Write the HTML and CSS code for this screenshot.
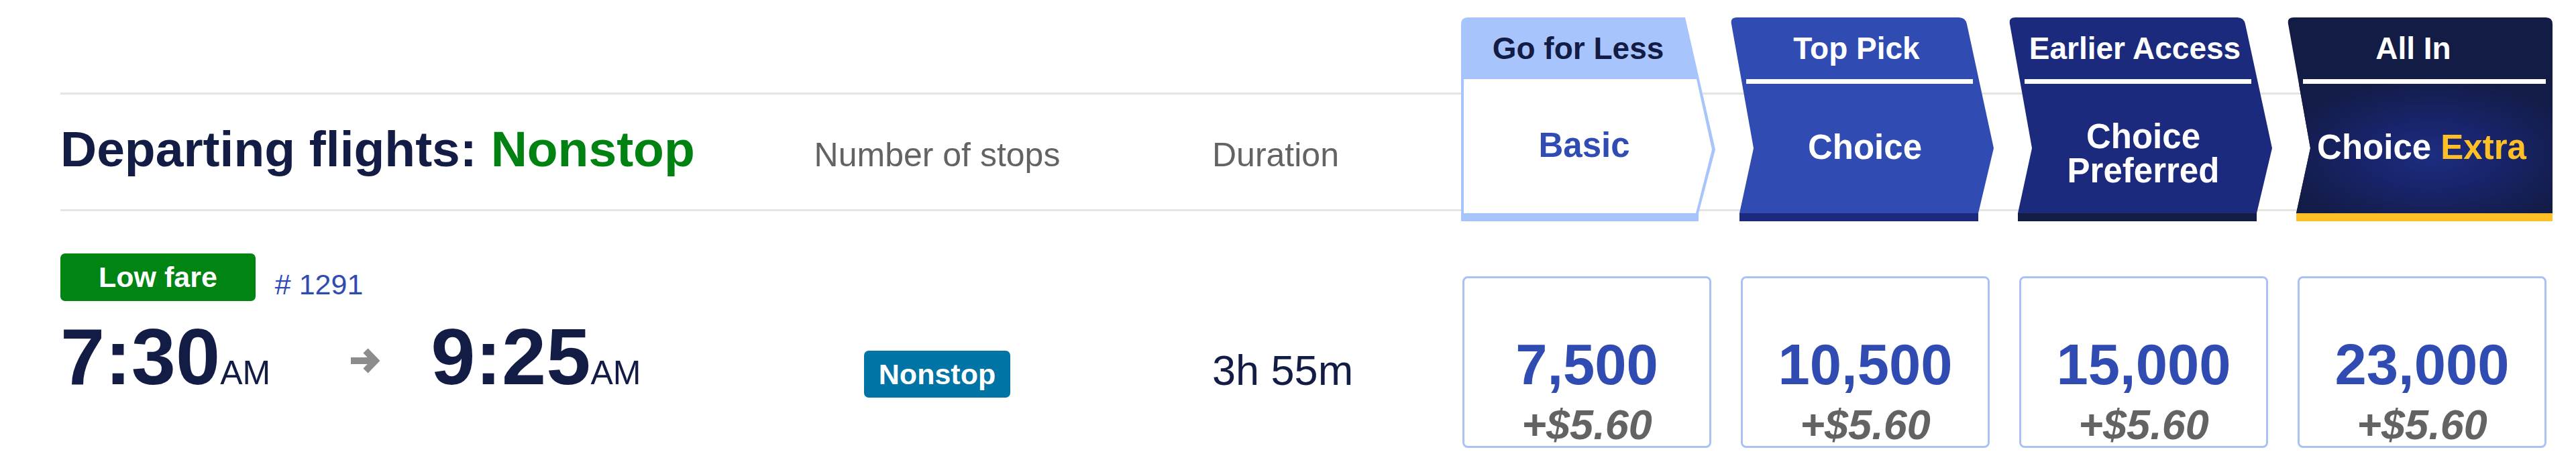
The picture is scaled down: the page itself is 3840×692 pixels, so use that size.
FILE: index.html
```html
<!DOCTYPE html>
<html lang="en">
<head>
<meta charset="utf-8">
<title>Departing flights</title>
<link rel="stylesheet" href="styles.css">
</head>
<body>
<main class="page">
  <section class="thead">
    <div class="thead-labels">
      <h2 class="title">Departing flights: <span class="title-accent">Nonstop</span></h2>
      <div class="col-stops col-label">Number of stops</div>
      <div class="col-dur col-label">Duration</div>
    </div>
    <div class="fare-tabs">
      <div class="tab tab-basic">
        <div class="tab-head">Go for Less</div>
        <div class="tab-body">Basic</div>
        <div class="tab-bar"></div>
      </div>
      <div class="tab tab-choice">
        <div class="tab-head">Top Pick</div>
        <div class="tab-rule"></div>
        <div class="tab-body">Choice</div>
        <div class="tab-bar"></div>
      </div>
      <div class="tab tab-pref">
        <div class="tab-head">Earlier Access</div>
        <div class="tab-rule"></div>
        <div class="tab-body tab-body-2">Choice<br>Preferred</div>
        <div class="tab-bar"></div>
      </div>
      <div class="tab tab-extra">
        <div class="tab-head">All In</div>
        <div class="tab-rule"></div>
        <div class="tab-body">Choice&nbsp;<span class="extra-word">Extra</span></div>
        <div class="tab-bar"></div>
      </div>
    </div>
  </section>

  <section class="flight">
    <div class="flight-main">
      <div class="flight-tags">
        <span class="badge-low">Low fare</span>
        <span class="flight-no"># 1291</span>
      </div>
      <div class="flight-times">
        <span class="time">7:30<span class="ampm">AM</span></span>
        <svg class="arrow" viewBox="0 0 44 44" width="44" height="44" aria-hidden="true">
          <path d="M0 22 H35" stroke="#8c8c8c" stroke-width="10" fill="none"/>
          <path d="M22 7 L36.5 22 L22 37" stroke="#8c8c8c" stroke-width="10" fill="none" stroke-linejoin="miter"/>
        </svg>
        <span class="time">9:25<span class="ampm">AM</span></span>
      </div>
    </div>
    <div class="col-stops stops-cell"><span class="badge-stops">Nonstop</span></div>
    <div class="col-dur duration">3h 55m</div>
    <div class="fare-cards">
      <div class="fare-card"><span class="points">7,500</span><span class="fee">+$5.60</span></div>
      <div class="fare-card"><span class="points">10,500</span><span class="fee">+$5.60</span></div>
      <div class="fare-card"><span class="points">15,000</span><span class="fee">+$5.60</span></div>
      <div class="fare-card"><span class="points">23,000</span><span class="fee">+$5.60</span></div>
    </div>
  </section>
</main>
</body>
</html>
```

FILE: styles.css
```css
* { box-sizing: border-box; }

html, body {
  margin: 0;
  background: #ffffff;
}

body {
  font-family: "Liberation Sans", Arial, Helvetica, sans-serif;
  color: #131c45;
}

.page {
  width: 3840px;
  padding: 26px 16px 0 90px;
}

/* ---------- header row ---------- */
.thead {
  display: flex;
  height: 304px;
  background:
    linear-gradient(#e4e4e4, #e4e4e4) 0 112px / calc(100% - 36px) 3px no-repeat,
    linear-gradient(#e4e4e4, #e4e4e4) 0 286px / calc(100% - 36px) 3px no-repeat;
}

.thead-labels {
  flex: none;
  width: 2074px;
  display: flex;
  align-items: baseline;
  padding-top: 159px;
}

.title {
  flex: none;
  width: 1000px;
  margin: 0;
  font-size: 75px;
  line-height: 1;
  font-weight: 700;
  color: #131c45;
}

.title-accent { color: #008212; }

.col-label {
  font-size: 50px;
  line-height: 1;
  color: #636363;
}

.col-stops {
  flex: none;
  width: 614px;
  text-align: center;
}

.col-dur {
  flex: none;
  width: 460px;
  padding-left: 103px;
}

/* ---------- fare tabs ---------- */
.fare-tabs {
  display: grid;
  grid-template-columns: repeat(4, 415px);
  height: 304px;
}

.tab {
  display: flex;
  flex-direction: column;
  height: 304px;
  color: #ffffff;
  font-weight: 700;
}

.tab-head {
  flex: none;
  height: 92px;
  display: flex;
  align-items: center;
  justify-content: center;
  padding-right: 38px;
  font-size: 46px;
  line-height: 1;
}

.tab-rule {
  flex: none;
  height: 7px;
  margin: 0 53px 0 24px;
  background: #ffffff;
}

.tab-body {
  flex: 1;
  display: flex;
  align-items: center;
  justify-content: center;
  text-align: center;
  padding: 0 29px 4px 16px;
  font-size: 51px;
  line-height: 51px;
}

.tab-body-2 { padding-top: 14px; padding-bottom: 0; }

.tab-bar {
  flex: none;
  height: 12px;
}

.tab-basic {
  background: #a8c4fc;
  clip-path: path('M 24 0 L 348 0 L 393 197 L 368 292 L 368 304 L 14 304 L 14 10 Q 14 0 24 0 Z');
}

.tab-basic .tab-head { color: #131c45; }

.tab-basic .tab-body {
  background: #ffffff;
  color: #304cb2;
  padding-right: 36px;
  clip-path: path('M 18 0 L 365 0 L 388 105 L 364 200 L 18 200 Z');
}

.tab-choice,
.tab-pref {
  clip-path: path('M 10 0 L 341 0 Q 351 0 353 10 L 393 195 L 370 292 L 370 304 L 14 304 L 14 292 L 35 195 L 2 10 Q 0 0 10 0 Z');
}

.tab-choice { background: #304cb2; }
.tab-choice .tab-bar { background: #1b2a7d; }

.tab-pref { background: #1b2a7d; }
.tab-pref .tab-bar { background: #131c45; }

.tab-extra {
  background: #131c45;
  clip-path: path('M 10 0 L 386 0 Q 396 0 396 10 L 396 304 L 14 304 L 14 292 L 35 195 L 2 10 Q 0 0 10 0 Z');
}

.tab-extra .tab-rule { margin-right: 29px; }

.tab-extra .tab-body {
  background: radial-gradient(ellipse 55% 60% at 52% 55%, #1d2d80 0%, #18246a 45%, #131c47 100%);
}

.tab-extra .tab-bar { background: #ffbf27; }

.extra-word { color: #ffbf27; }

/* ---------- flight row ---------- */
.flight {
  display: flex;
  align-items: flex-start;
  padding-top: 48px;
}

.flight-main {
  flex: none;
  width: 1000px;
}

.flight-tags {
  display: flex;
  align-items: flex-end;
  gap: 29px;
}

.badge-low {
  display: inline-flex;
  align-items: center;
  height: 71px;
  padding: 0 57px;
  background: #008512;
  color: #ffffff;
  font-size: 43px;
  font-weight: 700;
  border-radius: 7px;
}

.flight-no {
  font-size: 43px;
  color: #304cb2;
}

.flight-times {
  display: flex;
  align-items: flex-end;
  margin-top: 23px;
}

.time {
  font-size: 119px;
  line-height: 1;
  font-weight: 700;
  color: #131c45;
}

.ampm {
  font-size: 50px;
  font-weight: 400;
}

.arrow {
  flex: none;
  margin: 0 75px 31px 120px;
  overflow: visible;
}

.stops-cell { padding-top: 145px; }

.badge-stops {
  display: inline-flex;
  align-items: center;
  height: 70px;
  padding: 0 22px;
  background: #0074a4;
  color: #ffffff;
  font-size: 43px;
  font-weight: 700;
  border-radius: 7px;
}

.duration {
  padding-top: 143px;
  font-size: 63px;
  line-height: 1;
  color: #131c45;
}

/* ---------- fare cards ---------- */
.fare-cards {
  display: grid;
  grid-template-columns: repeat(4, 415px);
  padding-top: 34px;
}

.fare-card {
  margin-left: 16px;
  width: 371px;
  height: 256px;
  border: 3px solid #a9c2f6;
  border-radius: 8px;
  background: #ffffff;
  display: flex;
  flex-direction: column;
  justify-content: flex-end;
  align-items: center;
  line-height: 1;
}

.points {
  font-size: 85px;
  font-weight: 700;
  color: #304cb2;
}

.fee {
  margin-top: 16px;
  font-size: 63px;
  font-weight: 700;
  font-style: italic;
  color: #636363;
}
```
